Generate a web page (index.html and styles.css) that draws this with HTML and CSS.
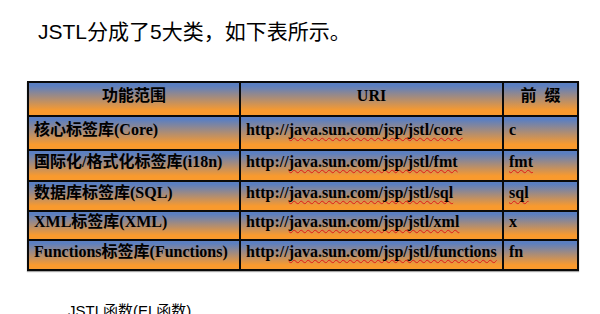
FILE: index.html
```html
<!DOCTYPE html>
<html lang="zh">
<head>
<meta charset="utf-8">
<link rel="stylesheet" href="styles.css">
</head>
<body>
<p class="title">JSTL分成了5大类，如下表所示。</p>
<table class="jstl">
  <colgroup>
    <col class="c1"><col class="c2"><col class="c3">
  </colgroup>
  <tr class="r-head">
    <th>功能范围</th>
    <th>URI</th>
    <th>前&ensp;缀</th>
  </tr>
  <tr class="r1">
    <td>核心标签库(Core)</td>
    <td>http://<span class="sp">java.sun.com/jsp/jstl/core</span></td>
    <td>c</td>
  </tr>
  <tr class="r2">
    <td>国际化/格式化标签库(i18n)</td>
    <td>http://<span class="sp">java.sun.com/jsp/jstl/fmt</span></td>
    <td><span class="sp">fmt</span></td>
  </tr>
  <tr class="r3">
    <td>数据库标签库(SQL)</td>
    <td>http://<span class="sp">java.sun.com/jsp/jstl/sql</span></td>
    <td><span class="sp">sql</span></td>
  </tr>
  <tr class="r4">
    <td>XML标签库(XML)</td>
    <td>http://<span class="sp">java.sun.com/jsp/jstl/xml</span></td>
    <td>x</td>
  </tr>
  <tr class="r5">
    <td>Functions标签库(Functions)</td>
    <td>http://<span class="sp">java.sun.com/jsp/jstl/functions</span></td>
    <td>fn</td>
  </tr>
</table>
<p class="sub">JSTL函数(EL函数)</p>
</body>
</html>
```
FILE: styles.css
```css
html, body {
  margin: 0;
  padding: 0;
  background: #ffffff;
  overflow: hidden;
}
body {
  width: 600px;
  height: 314px;
}
.title {
  margin: 20px 0 0 38px;
  font-family: "Liberation Sans", "Noto Sans CJK SC", sans-serif;
  font-size: 21px;
  line-height: 24px;
  color: #000;
}
.jstl {
  margin: 37px 0 0 27px;
  border-collapse: collapse;
  width: 550px;
  table-layout: fixed;
  box-shadow: 0 1px 1px rgba(0, 0, 0, 0.35);
  font-family: "Liberation Serif", "Noto Sans CJK SC", serif;
  font-weight: bold;
  font-size: 16px;
  line-height: 18px;
  color: #000;
}
.c1 { width: 212px; }
.c2 { width: 263px; }
.c3 { width: 75px; }
.jstl th, .jstl td {
  border: 2px solid #0a0a0a;
  padding: 0 5px 7px 5px;
  vertical-align: middle;
  text-align: left;
  white-space: nowrap;
  background: linear-gradient(to bottom, #5b7fc1 8%, #f99a2e 86%);
}
.jstl th {
  text-align: center;
}
.r-head { height: 34px; }
.r1 { height: 34px; }
.r2 { height: 31px; }
.r3 { height: 30px; }
.r4 { height: 29px; }
.r5 { height: 30px; }
.sp {
  text-decoration: underline wavy #e01818;
  text-decoration-thickness: 1px;
  text-underline-offset: 2px;
  text-decoration-skip-ink: none;
}
.sub {
  margin: 31px 0 0 68px;
  font-family: "Liberation Sans", "Noto Sans CJK SC", sans-serif;
  font-size: 15px;
  line-height: 18px;
  color: #000;
}
```
